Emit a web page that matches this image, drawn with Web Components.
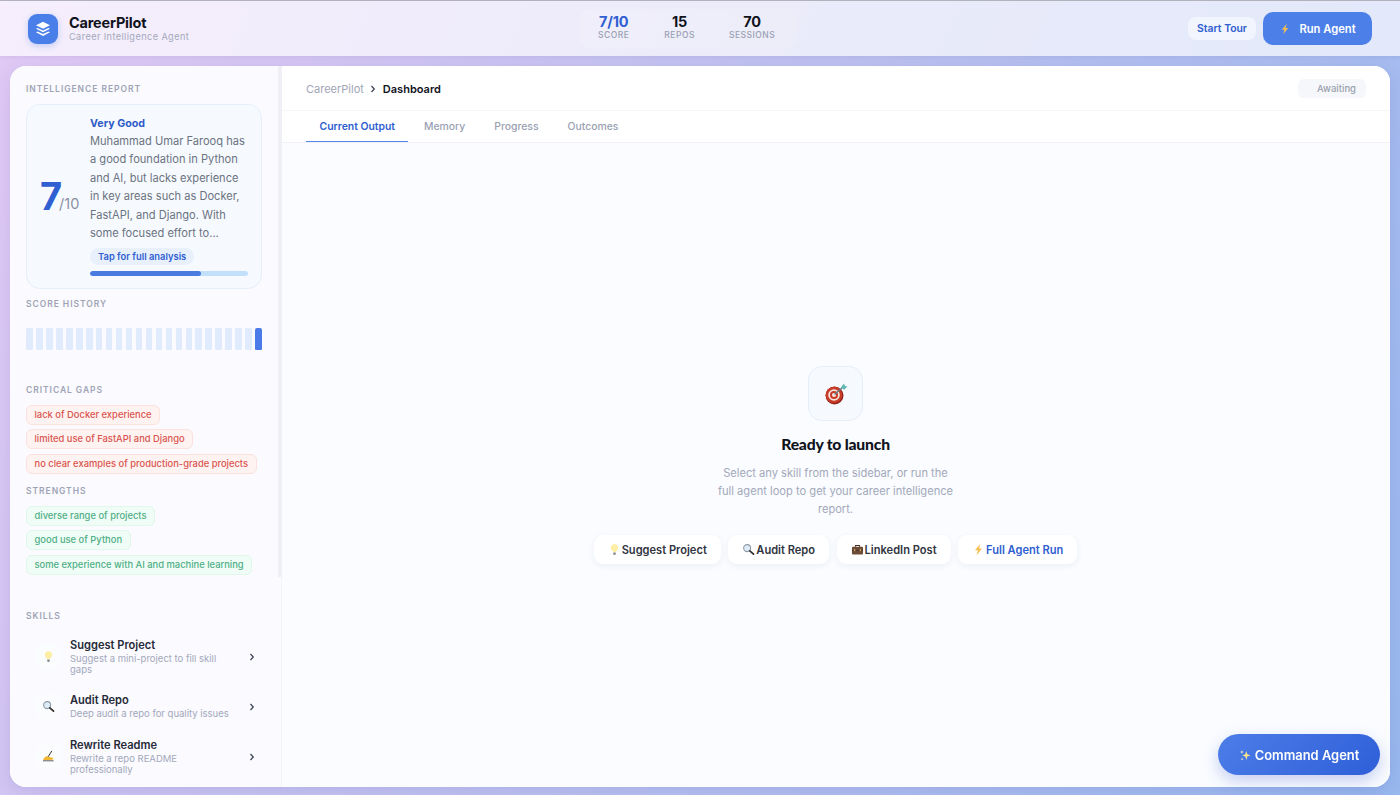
<!DOCTYPE html>
<html lang="en">
<head>
<meta charset="utf-8">
<title>CareerPilot</title>
<style>
  html, body { margin: 0; height: 100%; }
  body {
    font-family: Inter, "Liberation Sans", sans-serif;
    background: linear-gradient(115deg, #e2c9f5 0%, #c4c2f0 40%, #98b8ee 100%);
    overflow: hidden;
  }
  #app { display: flex; flex-direction: column; height: 795px; }
</style>
</head>
<body>
<div id="app">
  <cp-header></cp-header>
  <cp-shell>
    <cp-sidebar slot="side"></cp-sidebar>
    <cp-main slot="main"></cp-main>
  </cp-shell>
</div>
<cp-fab></cp-fab>

<script>
// Emoji drawn by hand, the sandbox has no colour emoji font
const EMOJI = {
  bulb: `<svg viewBox="0 0 16 16"><path d="M8 1.2a4.6 4.6 0 0 0-2.7 8.3c.6.5.9 1.1 1 1.8h3.4c.1-.7.4-1.3 1-1.8A4.6 4.6 0 0 0 8 1.2z" fill="#fdeea6"/><path d="M6.4 11.6h3.2v2.1l-.9 1h-1.4l-.9-1z" fill="#8d8f94"/></svg>`,
  lens: `<svg viewBox="0 0 16 16"><circle cx="6.3" cy="6.3" r="4.3" fill="#dcecf8" stroke="#8f9aa5" stroke-width="1.3"/><path d="M9.6 9.6l4.6 4.2" stroke="#33302e" stroke-width="2.1" stroke-linecap="round"/></svg>`,
  hand: `<svg viewBox="0 0 16 16"><path d="M11.8 1.6L7.6 8.2" stroke="#33302e" stroke-width="1.2" stroke-linecap="round"/><path d="M1.5 12.4c.6-2.6 2.6-4.6 5-4.6 1.3 0 2.3 1 3.6 1.1 1.5.2 3.7.4 3.9 1.7.1 1.2-1.4 1.8-3 1.8z" fill="#f2b632"/><path d="M1.2 13.3h13" stroke="#3a3a3a" stroke-width="1"/></svg>`,
  case: `<svg viewBox="0 0 16 16"><path d="M5.5 4.5V3h5v1.5" fill="none" stroke="#4a3426" stroke-width="1.3"/><rect x="1.2" y="4.5" width="13.6" height="9.5" rx="1.2" fill="#6d4c38"/><rect x="1.2" y="8.4" width="13.6" height="1" fill="#46301f"/><rect x="3.6" y="7.6" width="1.6" height="2.4" fill="#d9b26a"/><rect x="10.8" y="7.6" width="1.6" height="2.4" fill="#d9b26a"/></svg>`,
  bolt: `<svg viewBox="0 0 16 16"><path d="M10.4 1L3.6 9h3.6l-1.6 6 6.8-8.2H8.6z" fill="#f5bf52"/></svg>`,
  sparkle: `<svg viewBox="0 0 16 16"><path d="M9 2.5l1.3 4 3.9 1.4-3.9 1.4L9 13.5 7.7 9.3 3.9 7.9l3.8-1.4z" fill="#fbe38e"/><path d="M3.6 1.5l.6 1.7 1.6.6-1.6.6-.6 1.7-.6-1.7-1.6-.6 1.6-.6z" fill="#fdf0bb"/><path d="M3.8 10.5l.5 1.4 1.4.5-1.4.5-.5 1.4-.5-1.4-1.4-.5 1.4-.5z" fill="#fdf0bb"/></svg>`,
  target: `<svg viewBox="0 0 24 24"><circle cx="10.5" cy="13.5" r="9" fill="#8f2318"/><circle cx="10" cy="13" r="8.3" fill="#c93a28"/><circle cx="10" cy="13" r="5.8" fill="#f7e4dc"/><circle cx="10" cy="13" r="4" fill="#c93a28"/><circle cx="10" cy="13" r="2.1" fill="#f7e4dc"/><path d="M10.5 12.5L19 5" stroke="#5f7f86" stroke-width="1.3"/><path d="M17 5.2l3-3.6 1 2.3 2.5.6-3.4 3.2z" fill="#62b7b3"/></svg>`
};

class CpEmoji extends HTMLElement {
  connectedCallback() {
    const size = this.getAttribute('size') || 12;
    this.attachShadow({ mode: 'open' }).innerHTML = `
      <style>
        :host { display: inline-flex; width: ${size}px; height: ${size}px; flex: none; }
        svg { width: 100%; height: 100%; display: block; }
      </style>
      ${EMOJI[this.getAttribute('name')] || ''}`;
  }
}
customElements.define('cp-emoji', CpEmoji);

class CpStat extends HTMLElement {
  connectedCallback() {
    const color = this.hasAttribute('accent') ? '#2f5fd0' : '#10131c';
    this.attachShadow({ mode: 'open' }).innerHTML = `
      <style>
        :host { display: flex; flex-direction: column; align-items: center; }
        b { font-size: 14.5px; line-height: 16px; font-weight: 700; color: ${color}; letter-spacing: -.2px; }
        span { font-size: 8.5px; line-height: 11px; font-weight: 500; color: #9aa1b3; letter-spacing: .5px; }
      </style>
      <b>${this.getAttribute('value')}</b><span>${this.getAttribute('label')}</span>`;
  }
}
customElements.define('cp-stat', CpStat);

class CpHeader extends HTMLElement {
  connectedCallback() {
    this.attachShadow({ mode: 'open' }).innerHTML = `
      <style>
        :host {
          display: flex; justify-content: space-between; align-items: center;
          height: 55px; padding: 0 28px; flex: none; box-sizing: content-box;
          background: rgba(255,255,255,.68); border-top: 1px solid #b2b2bc;
          box-shadow: 0 1px 4px rgba(90,90,160,.12);
        }
        .brand { display: flex; align-items: center; gap: 11px; }
        .logo {
          width: 30px; height: 30px; border-radius: 9px; background: #4a7fe9;
          display: flex; align-items: center; justify-content: center;
          box-shadow: 0 2px 6px rgba(74,127,233,.3);
        }
        .logo svg { width: 18px; height: 18px; }
        h1 { margin: 0; font-size: 14.5px; line-height: 16px; font-weight: 700; color: #10131c; letter-spacing: -.2px; padding-top: 1px; }
        small { display: block; font-size: 9.2px; line-height: 12px; color: #a4a9bb; letter-spacing: .4px; }
        .stats {
          display: flex; gap: 34px; padding: 5px 22px 8px 18px; border-radius: 10px;
          background: rgba(255,255,255,.12);
        }
        .stats cp-stat:first-child { margin-right: 1px; }
        .actions { display: flex; align-items: center; gap: 7px; }
        .tour {
          height: 23px; padding: 0 9px; display: flex; align-items: center; border-radius: 8px;
          background: rgba(255,255,255,.5); color: #2f5fd0; font-size: 10.4px; font-weight: 600;
        }
        .run {
          width: 109px; height: 33px; display: flex; align-items: center; justify-content: center; gap: 8px;
          border-radius: 10px; background: #4c7fe8; color: #fff; font-size: 11.2px; font-weight: 600;
        }
      </style>
      <div class="brand">
        <div class="logo">
          <svg viewBox="0 0 18 18" fill="#fff">
            <path d="M9 1.8l7 3.5-7 3.5-7-3.5z"/>
            <path d="M3.5 7.9L9 10.6l5.5-2.7 1.5.9-7 3.5-7-3.5z"/>
            <path d="M3.5 11.4L9 14.1l5.5-2.7 1.5.9-7 3.7-7-3.7z"/>
          </svg>
        </div>
        <div><h1>CareerPilot</h1><small>Career Intelligence Agent</small></div>
      </div>
      <div class="stats">
        <cp-stat accent value="7/10" label="SCORE"></cp-stat>
        <cp-stat value="15" label="REPOS"></cp-stat>
        <cp-stat value="70" label="SESSIONS"></cp-stat>
      </div>
      <div class="actions">
        <div class="tour">Start Tour</div>
        <div class="run"><cp-emoji name="bolt" size="12"></cp-emoji>Run Agent</div>
      </div>`;
  }
}
customElements.define('cp-header', CpHeader);

class CpShell extends HTMLElement {
  connectedCallback() {
    this.attachShadow({ mode: 'open' }).innerHTML = `
      <style>
        :host { display: block; padding: 10px 10px 8px; flex: 1; min-height: 0; }
        .card {
          display: flex; height: 100%; border-radius: 16px; overflow: hidden; background: #fff;
          box-shadow: 0 4px 16px rgba(70,80,170,.14);
        }
      </style>
      <div class="card"><slot name="side"></slot><slot name="main"></slot></div>`;
  }
}
customElements.define('cp-shell', CpShell);

class CpLabel extends HTMLElement {
  connectedCallback() {
    this.attachShadow({ mode: 'open' }).innerHTML = `
      <style>
        :host {
          display: block; font-size: 8.5px; line-height: 11px; font-weight: 600;
          color: #9fa4b5; letter-spacing: .95px; text-transform: uppercase;
        }
      </style><slot></slot>`;
  }
}
customElements.define('cp-label', CpLabel);

class CpChip extends HTMLElement {
  connectedCallback() {
    const good = this.getAttribute('kind') === 'good';
    this.attachShadow({ mode: 'open' }).innerHTML = `
      <style>
        :host {
          display: block; width: fit-content; box-sizing: border-box; height: 20px; padding: 0 7.5px;
          line-height: 18px; font-size: 9.4px; font-weight: 500; border-radius: 6px; white-space: nowrap;
          color: ${good ? '#4fae85' : '#d9534f'};
          background: ${good ? '#f0fdf7' : '#fef3f1'};
          border: 1px solid ${good ? '#e0f8ec' : '#fbe2de'};
        }
      </style><slot></slot>`;
  }
}
customElements.define('cp-chip', CpChip);

class CpReport extends HTMLElement {
  connectedCallback() {
    this.attachShadow({ mode: 'open' }).innerHTML = `
      <style>
        :host {
          display: flex; box-sizing: border-box; height: 185px; width: 236px; align-items: flex-start;
          padding: 10px 13px 11px 13px; gap: 12px; border-radius: 14px;
          background: #f6faff; border: 1px solid #e6eef9;
        }
        .score { width: 38px; flex: none; align-self: center; display: flex; align-items: baseline; color: #2f5fd0; }
        .score b { font-size: 38px; line-height: 40px; font-weight: 700; letter-spacing: -3px; }
        .score span { font-size: 14.5px; color: #8a90a0; position: relative; top: -1px; }
        .body { flex: 1; min-width: 0; }
        .grade { font-size: 10.7px; line-height: 16px; padding-top: 1px; font-weight: 700; color: #2f5bc8; }
        p { margin: 0 0 5.6px; font-size: 11.1px; line-height: 18.4px; color: #6b7280; white-space: nowrap; }
        .tap {
          display: block; width: fit-content; height: 17px; line-height: 17px; padding: 0 8px; border-radius: 9px;
          background: #e8f0fc; color: #2f5fd0; font-size: 9.4px; font-weight: 600;
        }
        .track { height: 5px; margin-top: 6px; border-radius: 3px; background: #c3e0fb; overflow: hidden; }
        .fill { width: 70%; height: 100%; background: #4a7be0; border-radius: 3px; }
      </style>
      <div class="score"><b>7</b><span>/10</span></div>
      <div class="body">
        <div class="grade">Very Good</div>
        <p>Muhammad Umar Farooq has<br>a good foundation in Python<br>and AI, but lacks experience<br>in key areas such as Docker,<br>FastAPI, and Django. With<br>some focused effort to...</p>
        <span class="tap">Tap for full analysis</span>
        <div class="track"><div class="fill"></div></div>
      </div>`;
  }
}
customElements.define('cp-report', CpReport);

class CpHistory extends HTMLElement {
  connectedCallback() {
    const bars = Array.from({ length: 24 }, (_, i) =>
      `<i class="${i === 23 ? 'on' : ''}"></i>`).join('');
    this.attachShadow({ mode: 'open' }).innerHTML = `
      <style>
        :host { display: flex; justify-content: space-between; height: 22px; width: 236px; }
        i { width: 6.7px; background: #e0ebfd; border-radius: 1px; }
        i.on { background: #4a7be8; border-radius: 2px 2px 1px 1px; }
      </style>${bars}`;
  }
}
customElements.define('cp-history', CpHistory);

class CpSkill extends HTMLElement {
  connectedCallback() {
    this.attachShadow({ mode: 'open' }).innerHTML = `
      <style>
        :host { display: flex; align-items: center; padding-left: 10px; box-sizing: border-box; width: 229px; height: 50px; }
        .ico {
          width: 25px; height: 25px; margin-right: 9px; border-radius: 7px; background: #fbfcfe;
          display: flex; align-items: center; justify-content: center; flex: none;
        }
        .txt { width: 165px; flex: none; margin-right: auto; }
        b { display: block; font-size: 11.1px; line-height: 15px; font-weight: 600; color: #262a38; }
        span { display: block; font-size: 9.5px; line-height: 11.5px; color: #a3a8ba; }
        svg { width: 6px; height: 8px; flex: none; }
      </style>
      <div class="ico"><cp-emoji name="${this.getAttribute('icon')}" size="13"></cp-emoji></div>
      <div class="txt"><b>${this.getAttribute('title')}</b><span>${this.getAttribute('desc')}</span></div>
      <svg viewBox="0 0 6 8"><path d="M1.5 1l2.8 3-2.8 3" fill="none" stroke="#3a3f50" stroke-width="1.2"/></svg>`;
  }
}
customElements.define('cp-skill', CpSkill);

class CpSidebar extends HTMLElement {
  connectedCallback() {
    this.attachShadow({ mode: 'open' }).innerHTML = `
      <style>
        :host {
          display: flex; flex-direction: column; width: 272px; height: 100%; box-sizing: border-box;
          background: #fafaff; flex: none;
        }
        .top {
          height: 511px; flex: none; box-sizing: border-box; padding: 18px 0 0 16px;
          border-right: 4px solid #eef0f6;
        }
        .chips { display: flex; flex-direction: column; gap: 4.5px; margin-top: 8.5px; }
        cp-report { margin-top: 9px; }
        .hist-label { margin-top: 10px; }
        cp-history { margin-top: 18px; }
        .gaps { margin-top: 35px; }
        .str { margin-top: 12.5px; }
        .bottom { flex: 1; padding: 33.5px 0 0 16px; border-right: 1px solid #f3f4fa; }
        .skills { display: flex; flex-direction: column; margin-top: 10px; }
      </style>
      <div class="top">
        <cp-label>Intelligence Report</cp-label>
        <cp-report></cp-report>
        <cp-label class="hist-label">Score History</cp-label>
        <cp-history></cp-history>
        <cp-label class="gaps">Critical Gaps</cp-label>
        <div class="chips">
          <cp-chip>lack of Docker experience</cp-chip>
          <cp-chip>limited use of FastAPI and Django</cp-chip>
          <cp-chip>no clear examples of production-grade projects</cp-chip>
        </div>
        <cp-label class="str">Strengths</cp-label>
        <div class="chips">
          <cp-chip kind="good">diverse range of projects</cp-chip>
          <cp-chip kind="good">good use of Python</cp-chip>
          <cp-chip kind="good">some experience with AI and machine learning</cp-chip>
        </div>
      </div>
      <div class="bottom">
        <cp-label>Skills</cp-label>
        <div class="skills">
          <cp-skill icon="bulb" title="Suggest Project" desc="Suggest a mini-project to fill skill gaps"></cp-skill>
          <cp-skill icon="lens" title="Audit Repo" desc="Deep audit a repo for quality issues"></cp-skill>
          <cp-skill icon="hand" title="Rewrite Readme" desc="Rewrite a repo README professionally"></cp-skill>
        </div>
      </div>`;
  }
}
customElements.define('cp-sidebar', CpSidebar);

class CpTabs extends HTMLElement {
  connectedCallback() {
    const tabs = (this.getAttribute('items') || '').split(',');
    this.attachShadow({ mode: 'open' }).innerHTML = `
      <style>
        :host {
          display: flex; gap: 2px; height: 32px; box-sizing: border-box; padding-left: 24px; flex: none;
          background: #fff; border-bottom: 1px solid #f0f2f8;
        }
        div {
          padding: 0 13.5px; line-height: 31px; height: 31px; box-sizing: border-box;
          font-size: 10.4px; font-weight: 500; color: #9aa1b3;
        }
        div.on { color: #2f5fd0; font-weight: 600; border-bottom: 1.5px solid #5585ea; }
      </style>
      ${tabs.map((t, i) => `<div class="${i === 0 ? 'on' : ''}">${t}</div>`).join('')}`;
  }
}
customElements.define('cp-tabs', CpTabs);

class CpQuick extends HTMLElement {
  connectedCallback() {
    const accent = this.hasAttribute('accent');
    this.attachShadow({ mode: 'open' }).innerHTML = `
      <style>
        :host {
          display: inline-flex; align-items: center; gap: 1px; height: 29px; padding: 0 14px; border-radius: 9px;
          background: #fff; box-shadow: 0 2px 6px rgba(60,70,120,.07); white-space: nowrap;
          font-size: 11.1px; font-weight: 600; color: ${accent ? '#2f5fd0' : '#30343f'};
        }
      </style>
      <cp-emoji name="${this.getAttribute('icon')}" size="13"></cp-emoji><slot></slot>`;
  }
}
customElements.define('cp-quick', CpQuick);

class CpEmpty extends HTMLElement {
  connectedCallback() {
    this.attachShadow({ mode: 'open' }).innerHTML = `
      <style>
        :host {
          display: flex; flex-direction: column; align-items: center; flex: 1; padding: 223px 1px 0 0;
          background: #fafcff;
        }
        .ico {
          width: 55px; height: 55px; box-sizing: border-box; border-radius: 14px; background: #f6faff;
          border: 1px solid #e6eef8; display: flex; align-items: center; justify-content: center;
        }
        h2 {
          margin: 14px 0 0; font-family: Lato, sans-serif; font-size: 15.7px; line-height: 18px;
          font-weight: 900; color: #10131c; letter-spacing: -.2px;
        }
        p { margin: 10.5px 0 17.5px; text-align: center; font-size: 11.14px; line-height: 18px; color: #a3a8ba; }
        .row { display: flex; gap: 7.5px; }
      </style>
      <div class="ico"><cp-emoji name="target" size="24"></cp-emoji></div>
      <h2>Ready to launch</h2>
      <p>Select any skill from the sidebar, or run the<br>full agent loop to get your career intelligence<br>report.</p>
      <div class="row">
        <cp-quick icon="bulb">Suggest Project</cp-quick>
        <cp-quick icon="lens">Audit Repo</cp-quick>
        <cp-quick icon="case">LinkedIn Post</cp-quick>
        <cp-quick icon="bolt" accent>Full Agent Run</cp-quick>
      </div>`;
  }
}
customElements.define('cp-empty', CpEmpty);

class CpMain extends HTMLElement {
  connectedCallback() {
    this.attachShadow({ mode: 'open' }).innerHTML = `
      <style>
        :host { display: flex; flex-direction: column; flex: 1; min-width: 0; height: 100%; }
        .bar {
          display: flex; align-items: center; justify-content: space-between; height: 45px; flex: none;
          box-sizing: border-box; padding: 0 24px; border-bottom: 1px solid #f5f6fa; background: #fff;
        }
        .crumb { display: flex; align-items: center; gap: 6.5px; margin-top: 1px; font-size: 11px; color: #a0a5b5; }
        .crumb b { color: #10131c; font-weight: 600; }
        .crumb svg { width: 6px; height: 8px; }
        .status {
          width: 68px; height: 19px; box-sizing: border-box; padding-right: 10px; text-align: right; line-height: 19px;
          border-radius: 6px; background: #f5f7fa; color: #9aa1ad; font-size: 9.5px; font-weight: 500;
        }
      </style>
      <div class="bar">
        <div class="crumb">CareerPilot
          <svg viewBox="0 0 6 8"><path d="M1.5 1l2.8 3-2.8 3" fill="none" stroke="#3a3f50" stroke-width="1.2"/></svg>
          <b>Dashboard</b></div>
        <div class="status">Awaiting</div>
      </div>
      <cp-tabs items="Current Output,Memory,Progress,Outcomes"></cp-tabs>
      <cp-empty></cp-empty>`;
  }
}
customElements.define('cp-main', CpMain);

class CpFab extends HTMLElement {
  connectedCallback() {
    this.attachShadow({ mode: 'open' }).innerHTML = `
      <style>
        :host {
          position: fixed; right: 20px; top: 734px; width: 162px; height: 41px; border-radius: 21px;
          box-sizing: border-box; padding-top: 1px;
          display: flex; align-items: center; justify-content: center; gap: 3px;
          background: linear-gradient(135deg, #4c7de8, #2f5fd8); color: #fff;
          font-size: 12.9px; font-weight: 600;
          box-shadow: 0 6px 16px rgba(60,90,200,.28);
        }
      </style>
      <cp-emoji name="sparkle" size="13"></cp-emoji>Command Agent`;
  }
}
customElements.define('cp-fab', CpFab);
</script>
</body>
</html>
